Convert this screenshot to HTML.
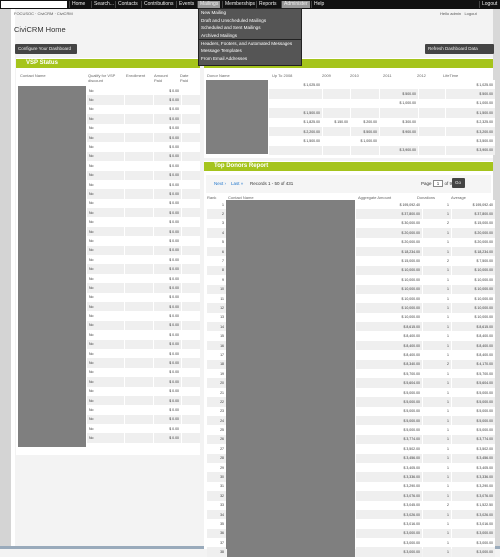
<!DOCTYPE html>
<html><head><meta charset="utf-8"><style>
*{margin:0;padding:0;box-sizing:border-box}
body{width:500px;height:549px;overflow:hidden;background:#f3f3f3;font-family:"Liberation Sans",sans-serif;font-size:4px;color:#333;position:relative}
.a{position:absolute}
#nav{left:0;top:0;width:500px;height:9px;background:#111}
#nav span{position:absolute;top:1px;color:#eee;font-size:5px;line-height:7px;padding:0 2px;border-left:1px solid #444}
.hl{background:#999;color:#fff}
#dd{left:198px;top:8px;width:104px;height:58px;background:#555;border:1px solid #222}
#dd div{color:#fff;font-size:4.6px;padding-left:2px;height:7.6px;line-height:7.6px;white-space:nowrap}
.btn{background:#444;color:#eee;font-size:4.5px;line-height:10px;padding:0 3px;border-radius:1px;white-space:nowrap;overflow:hidden}
.gh{background:#a5c41c;color:#fff;font-weight:bold;font-size:6px;line-height:9px;padding-left:10px}
table{border-collapse:separate;border-spacing:1px 0;position:absolute;table-layout:fixed}
td{height:9.4px;font-size:3.5px;line-height:4px;text-align:right;padding-right:2px;background:#fff}
tr:nth-child(even) td{background:#efefef}
td.l{text-align:left;padding-left:2px}
td.g{background:#7f7f7f!important}
.th{font-size:4px;color:#666}
</style></head><body>
<div class="a" style="left:0;top:9px;width:11px;height:540px;background:#d4d4d4"></div>
<div class="a" style="left:11px;top:9px;width:4px;height:540px;background:#fff"></div>
<div class="a" style="left:493px;top:9px;width:7px;height:540px;background:#d8d8d8"></div>
<div class="a" style="left:0;top:546px;width:500px;height:3px;background:#9ab"></div>
<div id="nav" class="a">
<div class="a" style="left:1px;top:1px;width:66px;height:7px;background:#fff"></div>
<span style="left:69px">Home</span><span style="left:91px">Search...</span><span style="left:115px">Contacts</span><span style="left:141px">Contributions</span><span style="left:176px">Events</span><span class="hl" style="left:197px">Mailings</span><span style="left:222px">Memberships</span><span style="left:256px">Reports</span><span class="hl" style="left:281px">Administer</span><span style="left:311px">Help</span><span style="left:479px">Logout</span>
</div>
<div class="a" style="left:14px;top:11px;font-size:4px;color:#555">FOCUSOC · CiviCRM · CiviCRM</div>
<div class="a" style="left:440px;top:11px;font-size:4px;color:#555">Hello admin &nbsp; Logout</div>
<div class="a" style="left:14px;top:25px;font-size:7.5px;color:#333">CiviCRM Home</div>
<div class="a btn" style="left:15px;top:44px;height:10px;width:62px">Configure Your Dashboard</div>
<div class="a btn" style="left:425px;top:44px;height:10px;width:69px">Refresh Dashboard Data</div>
<div class="a" style="left:16px;top:58px;width:184px;height:397px;background:#fff"></div>
<div class="a gh" style="left:16px;top:59px;width:184px;height:9px">VSP Status</div>
<div class="a th" style="left:20px;top:73px">Contact Name</div>
<div class="a th" style="left:88px;top:73px">Qualify for VSP<br>discount</div>
<div class="a th" style="left:126px;top:73px">Enrollment</div>
<div class="a th" style="left:154px;top:73px">Amount<br>Paid</div>
<div class="a th" style="left:180px;top:73px">Date<br>Paid</div>
<div class="a" style="left:18px;top:86px;width:68px;height:361px;background:#7f7f7f"></div>
<table style="left:86px;top:86px;width:112px"><colgroup><col style="width:37px"><col style="width:28px"><col style="width:27px"><col style="width:18px"></colgroup>
<tr><td class="l">No</td><td></td><td>$ 0.00</td><td></td></tr><tr><td class="l">No</td><td></td><td>$ 0.00</td><td></td></tr><tr><td class="l">No</td><td></td><td>$ 0.00</td><td></td></tr><tr><td class="l">No</td><td></td><td>$ 0.00</td><td></td></tr><tr><td class="l">No</td><td></td><td>$ 0.00</td><td></td></tr><tr><td class="l">No</td><td></td><td>$ 0.00</td><td></td></tr><tr><td class="l">No</td><td></td><td>$ 0.00</td><td></td></tr><tr><td class="l">No</td><td></td><td>$ 0.00</td><td></td></tr><tr><td class="l">No</td><td></td><td>$ 0.00</td><td></td></tr><tr><td class="l">No</td><td></td><td>$ 0.00</td><td></td></tr>
<tr><td class="l">No</td><td></td><td>$ 0.00</td><td></td></tr><tr><td class="l">No</td><td></td><td>$ 0.00</td><td></td></tr><tr><td class="l">No</td><td></td><td>$ 0.00</td><td></td></tr><tr><td class="l">No</td><td></td><td>$ 0.00</td><td></td></tr><tr><td class="l">No</td><td></td><td>$ 0.00</td><td></td></tr><tr><td class="l">No</td><td></td><td>$ 0.00</td><td></td></tr><tr><td class="l">No</td><td></td><td>$ 0.00</td><td></td></tr><tr><td class="l">No</td><td></td><td>$ 0.00</td><td></td></tr><tr><td class="l">No</td><td></td><td>$ 0.00</td><td></td></tr><tr><td class="l">No</td><td></td><td>$ 0.00</td><td></td></tr>
<tr><td class="l">No</td><td></td><td>$ 0.00</td><td></td></tr><tr><td class="l">No</td><td></td><td>$ 0.00</td><td></td></tr><tr><td class="l">No</td><td></td><td>$ 0.00</td><td></td></tr><tr><td class="l">No</td><td></td><td>$ 0.00</td><td></td></tr><tr><td class="l">No</td><td></td><td>$ 0.00</td><td></td></tr><tr><td class="l">No</td><td></td><td>$ 0.00</td><td></td></tr><tr><td class="l">No</td><td></td><td>$ 0.00</td><td></td></tr><tr><td class="l">No</td><td></td><td>$ 0.00</td><td></td></tr><tr><td class="l">No</td><td></td><td>$ 0.00</td><td></td></tr><tr><td class="l">No</td><td></td><td>$ 0.00</td><td></td></tr>
<tr><td class="l">No</td><td></td><td>$ 0.00</td><td></td></tr><tr><td class="l">No</td><td></td><td>$ 0.00</td><td></td></tr><tr><td class="l">No</td><td></td><td>$ 0.00</td><td></td></tr><tr><td class="l">No</td><td></td><td>$ 0.00</td><td></td></tr><tr><td class="l">No</td><td></td><td>$ 0.00</td><td></td></tr><tr><td class="l">No</td><td></td><td>$ 0.00</td><td></td></tr><tr><td class="l">No</td><td></td><td>$ 0.00</td><td></td></tr><tr><td class="l">No</td><td></td><td>$ 0.00</td><td></td></tr>
</table>
<div class="a" style="left:204px;top:58px;width:289px;height:100px;background:#fff"></div>
<div class="a gh" style="left:204px;top:59px;width:289px;height:9px"></div>
<div class="a th" style="left:207px;top:73px">Donor Name</div>
<div class="a th" style="left:272px;top:73px">Up To 2008</div>
<div class="a th" style="left:322px;top:73px">2009</div>
<div class="a th" style="left:350px;top:73px">2010</div>
<div class="a th" style="left:383px;top:73px">2011</div>
<div class="a th" style="left:417px;top:73px">2012</div>
<div class="a th" style="left:443px;top:73px">LifeTime</div>
<div class="a" style="left:206px;top:80px;width:62px;height:74px;background:#7f7f7f"></div>
<table style="left:268px;top:80px;width:225px"><colgroup><col style="width:53px"><col style="width:27px"><col style="width:28px"><col style="width:38px"><col style="width:26px"><col style="width:49px"></colgroup>
<tr><td>$ 1,025.00</td><td></td><td></td><td></td><td></td><td>$ 1,025.00</td></tr>
<tr><td></td><td></td><td></td><td>$ 500.00</td><td></td><td>$ 500.00</td></tr>
<tr><td></td><td></td><td></td><td>$ 1,000.00</td><td></td><td>$ 1,000.00</td></tr>
<tr><td>$ 1,500.00</td><td></td><td></td><td></td><td></td><td>$ 1,500.00</td></tr>
<tr><td>$ 1,825.00</td><td>$ 150.00</td><td>$ 200.00</td><td>$ 300.00</td><td></td><td>$ 2,325.00</td></tr>
<tr><td>$ 2,200.00</td><td></td><td>$ 500.00</td><td>$ 900.00</td><td></td><td>$ 3,200.00</td></tr>
<tr><td>$ 1,500.00</td><td></td><td>$ 1,000.00</td><td></td><td></td><td>$ 3,500.00</td></tr>
<tr><td></td><td></td><td></td><td>$ 3,900.00</td><td></td><td>$ 3,900.00</td></tr>
</table>
<div class="a" style="left:204px;top:161px;width:289px;height:388px;background:#fff"></div>
<div class="a gh" style="left:204px;top:162px;width:289px;height:9px">Top Donors Report</div>
<div class="a" style="left:206px;top:175px;width:285px;height:18px;background:#f5f5f5"></div>
<div class="a" style="left:214px;top:181px;font-size:4.5px;color:#27c">Next › &nbsp;&nbsp; Last »</div>
<div class="a" style="left:250px;top:181px;font-size:4.5px">Records 1 - 50 of 431</div>
<div class="a" style="left:421px;top:181px;font-size:4.5px">Page <span style="border:1px solid #888;padding:0 3px;background:#fff">1</span> of 9</div>
<div class="a btn" style="left:452px;top:178px;width:13px;height:10px;line-height:10px">Go</div>
<div class="a th" style="left:207px;top:195px">Rank</div>
<div class="a th" style="left:228px;top:195px">Contact Name</div>
<div class="a th" style="left:358px;top:195px">Aggregate Amount</div>
<div class="a th" style="left:417px;top:195px">Donations</div>
<div class="a th" style="left:451px;top:195px">Average</div>
<div class="a" style="left:225px;top:200px;width:128px;height:349px;background:#7f7f7f"></div>
<table style="left:206px;top:200px;width:287px"><colgroup><col style="width:19px"><col style="width:128px"><col style="width:66px"><col style="width:28px"><col style="width:43px"></colgroup>
<tr><td>1</td><td class="g"></td><td>$ 195,092.40</td><td>1</td><td>$ 195,092.40</td></tr>
<tr><td>2</td><td class="g"></td><td>$ 37,800.00</td><td>1</td><td>$ 37,800.00</td></tr>
<tr><td>3</td><td class="g"></td><td>$ 30,000.00</td><td>2</td><td>$ 15,000.00</td></tr>
<tr><td>4</td><td class="g"></td><td>$ 20,000.00</td><td>1</td><td>$ 20,000.00</td></tr>
<tr><td>5</td><td class="g"></td><td>$ 20,000.00</td><td>1</td><td>$ 20,000.00</td></tr>
<tr><td>6</td><td class="g"></td><td>$ 18,234.00</td><td>1</td><td>$ 18,234.00</td></tr>
<tr><td>7</td><td class="g"></td><td>$ 15,000.00</td><td>2</td><td>$ 7,500.00</td></tr>
<tr><td>8</td><td class="g"></td><td>$ 10,000.00</td><td>1</td><td>$ 10,000.00</td></tr>
<tr><td>9</td><td class="g"></td><td>$ 10,000.00</td><td>1</td><td>$ 10,000.00</td></tr>
<tr><td>10</td><td class="g"></td><td>$ 10,000.00</td><td>1</td><td>$ 10,000.00</td></tr>
<tr><td>11</td><td class="g"></td><td>$ 10,000.00</td><td>1</td><td>$ 10,000.00</td></tr>
<tr><td>12</td><td class="g"></td><td>$ 10,000.00</td><td>1</td><td>$ 10,000.00</td></tr>
<tr><td>13</td><td class="g"></td><td>$ 10,000.00</td><td>1</td><td>$ 10,000.00</td></tr>
<tr><td>14</td><td class="g"></td><td>$ 8,615.00</td><td>1</td><td>$ 8,615.00</td></tr>
<tr><td>15</td><td class="g"></td><td>$ 8,400.00</td><td>1</td><td>$ 8,400.00</td></tr>
<tr><td>16</td><td class="g"></td><td>$ 8,400.00</td><td>1</td><td>$ 8,400.00</td></tr>
<tr><td>17</td><td class="g"></td><td>$ 8,400.00</td><td>1</td><td>$ 8,400.00</td></tr>
<tr><td>18</td><td class="g"></td><td>$ 8,340.00</td><td>2</td><td>$ 4,170.00</td></tr>
<tr><td>19</td><td class="g"></td><td>$ 5,700.00</td><td>1</td><td>$ 5,700.00</td></tr>
<tr><td>20</td><td class="g"></td><td>$ 5,604.00</td><td>1</td><td>$ 5,604.00</td></tr>
<tr><td>21</td><td class="g"></td><td>$ 5,000.00</td><td>1</td><td>$ 5,000.00</td></tr>
<tr><td>22</td><td class="g"></td><td>$ 5,000.00</td><td>1</td><td>$ 5,000.00</td></tr>
<tr><td>23</td><td class="g"></td><td>$ 5,000.00</td><td>1</td><td>$ 5,000.00</td></tr>
<tr><td>24</td><td class="g"></td><td>$ 5,000.00</td><td>1</td><td>$ 5,000.00</td></tr>
<tr><td>25</td><td class="g"></td><td>$ 5,000.00</td><td>1</td><td>$ 5,000.00</td></tr>
<tr><td>26</td><td class="g"></td><td>$ 3,774.00</td><td>1</td><td>$ 3,774.00</td></tr>
<tr><td>27</td><td class="g"></td><td>$ 3,502.00</td><td>1</td><td>$ 3,502.00</td></tr>
<tr><td>28</td><td class="g"></td><td>$ 3,456.00</td><td>1</td><td>$ 3,456.00</td></tr>
<tr><td>29</td><td class="g"></td><td>$ 3,405.00</td><td>1</td><td>$ 3,405.00</td></tr>
<tr><td>30</td><td class="g"></td><td>$ 3,336.00</td><td>1</td><td>$ 3,336.00</td></tr>
<tr><td>31</td><td class="g"></td><td>$ 3,290.00</td><td>1</td><td>$ 3,290.00</td></tr>
<tr><td>32</td><td class="g"></td><td>$ 3,076.00</td><td>1</td><td>$ 3,076.00</td></tr>
<tr><td>33</td><td class="g"></td><td>$ 3,045.00</td><td>2</td><td>$ 1,522.50</td></tr>
<tr><td>34</td><td class="g"></td><td>$ 3,026.00</td><td>1</td><td>$ 3,026.00</td></tr>
<tr><td>35</td><td class="g"></td><td>$ 3,016.00</td><td>1</td><td>$ 3,016.00</td></tr>
<tr><td>36</td><td class="g"></td><td>$ 3,000.00</td><td>1</td><td>$ 3,000.00</td></tr>
<tr><td>37</td><td class="g"></td><td>$ 3,000.00</td><td>1</td><td>$ 3,000.00</td></tr>
<tr><td>38</td><td class="g"></td><td>$ 3,000.00</td><td>1</td><td>$ 3,000.00</td></tr>
</table>
<div id="dd" class="a">
<div>New Mailing</div><div>Draft and Unscheduled Mailings</div><div>Scheduled and Sent Mailings</div><div>Archived Mailings</div>
<div style="border-top:1px solid #222">Headers, Footers, and Automated Messages</div><div>Message Templates</div><div>From Email Addresses</div>
</div>
</body></html>
